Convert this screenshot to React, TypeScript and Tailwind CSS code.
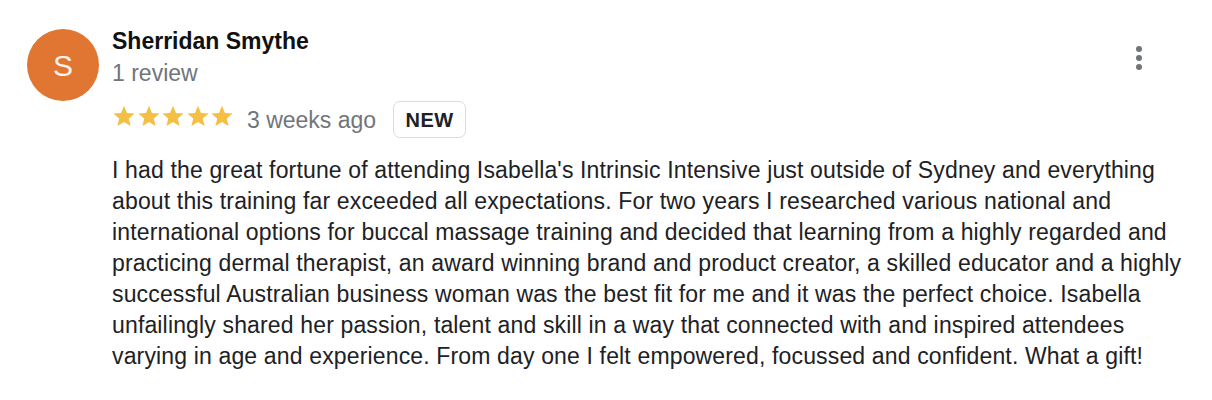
import React from "react";

const Star = () => (
  <svg width="24" height="24" viewBox="0 0 24 24" className="block">
    <path
      fill="#f4bf42"
      d="M12 1.8l2.95 7.1 7.65.6-5.83 5 1.8 7.5L12 18l-6.57 4 1.8-7.5-5.83-5 7.65-.6z"
    />
  </svg>
);

export default function App() {
  return (
    <div
      className="w-[1212px] h-[400px] bg-white relative"
      style={{ fontFamily: '"Liberation Sans", Arial, sans-serif' }}
    >
      <div className="flex pl-[27px] pt-[26px]">
        <div className="w-[72px] h-[72px] mt-[3px] rounded-full bg-[#e07631] flex items-center justify-center text-[#fdf3ec] text-[30px] shrink-0">
          S
        </div>
        <div className="ml-[13px]">
          <div className="text-[23px] font-bold text-[#111] leading-[30px]">
            Sherridan Smythe
          </div>
          <div className="text-[23px] text-[#70757a] leading-[30px] mt-[2px]">
            1 review
          </div>
          <div className="flex items-center mt-[13px] h-[37px]">
            <div className="flex gap-[0.5px] self-start mt-[3px]">
              <Star />
              <Star />
              <Star />
              <Star />
              <Star />
            </div>
            <span className="ml-[13px] text-[23px] leading-[30px] text-[#70757a]">3 weeks ago</span>
            <span className="ml-[17px] h-[37px] w-[73px] border border-[#dadce0] rounded-[7px] flex items-center justify-center text-[20px] font-bold text-[#202124] tracking-[0.5px]">
              NEW
            </span>
          </div>
          <p className="w-[1082px] mt-[17px] text-[23px] leading-[31px] tracking-[0.15px] text-[#202124]">
            I had the great fortune of attending Isabella's Intrinsic Intensive just outside of Sydney and everything about this training far exceeded all expectations. For two years I researched various national and international options for buccal massage training and decided that learning from a highly regarded and practicing dermal therapist, an award winning brand and product creator, a skilled educator and a highly successful Australian business woman was the best fit for me and it was the perfect choice. Isabella unfailingly shared her passion, talent and skill in a way that connected with and inspired attendees varying in age and experience. From day one I felt empowered, focussed and confident. What a gift!
          </p>
        </div>
      </div>
      <div className="absolute left-[1136px] top-[46px] flex flex-col gap-[3px]">
        <span className="w-[6px] h-[6px] rounded-full bg-[#70757a]" />
        <span className="w-[6px] h-[6px] rounded-full bg-[#70757a]" />
        <span className="w-[6px] h-[6px] rounded-full bg-[#70757a]" />
      </div>
    </div>
  );
}
